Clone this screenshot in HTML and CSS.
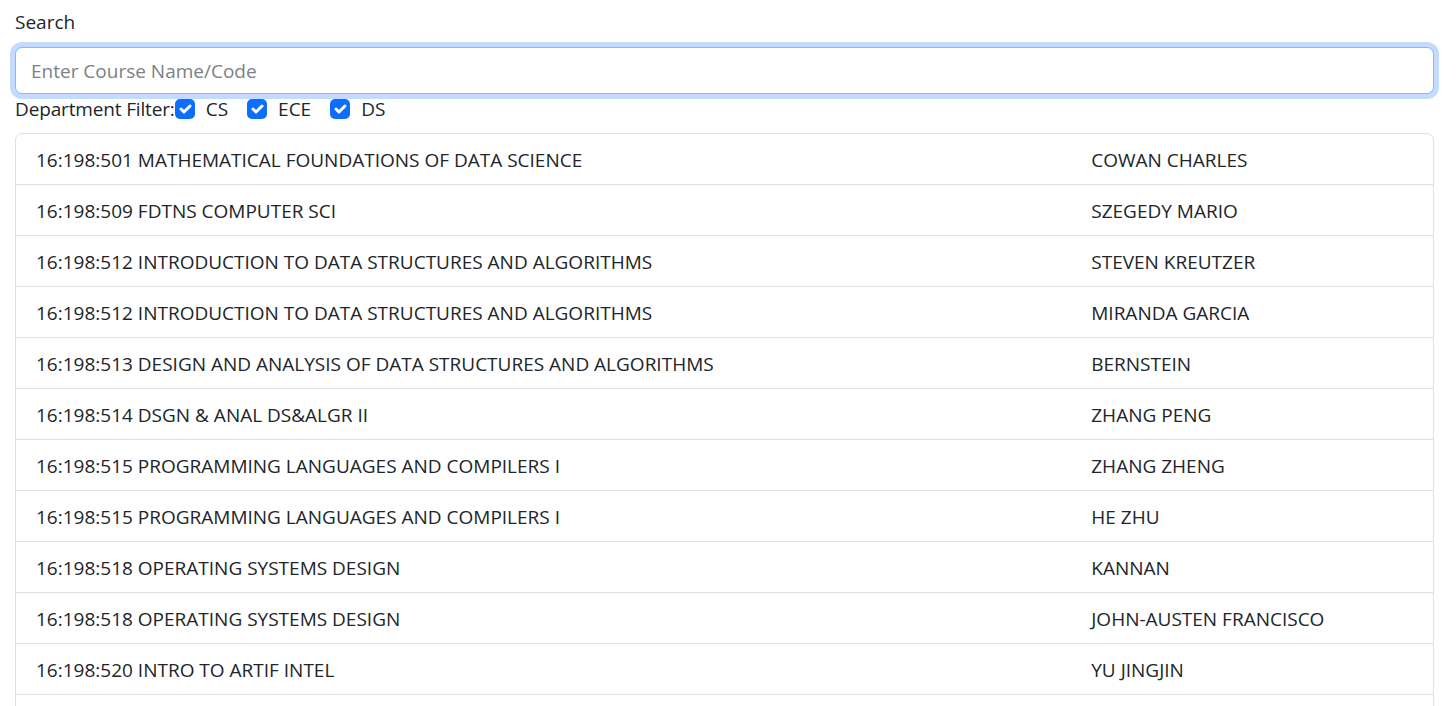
FILE: index.html
```html
<!DOCTYPE html>
<html lang="en">
<head>
<meta charset="utf-8">
<title>Course Search</title>
<link rel="stylesheet" href="styles.css">
</head>
<body>
<div class="page">
  <label class="form-label" for="search">Search</label>
  <input id="search" class="form-control is-focused" type="text" placeholder="Enter Course Name/Code" autofocus>
  <div class="filter">
    <span class="filter-title">Department Filter:</span>
    <label class="check"><span class="box"><svg viewBox="0 0 20 20" width="20" height="20"><path d="m6 10 3 3 6-6" fill="none" stroke="#fff" stroke-width="3" stroke-linecap="round" stroke-linejoin="round"/></svg></span><span class="check-label">CS</span></label>
    <label class="check"><span class="box"><svg viewBox="0 0 20 20" width="20" height="20"><path d="m6 10 3 3 6-6" fill="none" stroke="#fff" stroke-width="3" stroke-linecap="round" stroke-linejoin="round"/></svg></span><span class="check-label">ECE</span></label>
    <label class="check"><span class="box"><svg viewBox="0 0 20 20" width="20" height="20"><path d="m6 10 3 3 6-6" fill="none" stroke="#fff" stroke-width="3" stroke-linecap="round" stroke-linejoin="round"/></svg></span><span class="check-label">DS</span></label>
  </div>
  <ul class="list-group">
    <li class="item"><span class="col-course">16:198:501 MATHEMATICAL FOUNDATIONS OF DATA SCIENCE</span><span class="col-prof">COWAN CHARLES</span></li>
    <li class="item"><span class="col-course">16:198:509 FDTNS COMPUTER SCI</span><span class="col-prof">SZEGEDY MARIO</span></li>
    <li class="item"><span class="col-course">16:198:512 INTRODUCTION TO DATA STRUCTURES AND ALGORITHMS</span><span class="col-prof">STEVEN KREUTZER</span></li>
    <li class="item"><span class="col-course">16:198:512 INTRODUCTION TO DATA STRUCTURES AND ALGORITHMS</span><span class="col-prof">MIRANDA GARCIA</span></li>
    <li class="item"><span class="col-course">16:198:513 DESIGN AND ANALYSIS OF DATA STRUCTURES AND ALGORITHMS</span><span class="col-prof">BERNSTEIN</span></li>
    <li class="item"><span class="col-course">16:198:514 DSGN &amp; ANAL DS&amp;ALGR II</span><span class="col-prof">ZHANG PENG</span></li>
    <li class="item"><span class="col-course">16:198:515 PROGRAMMING LANGUAGES AND COMPILERS I</span><span class="col-prof">ZHANG ZHENG</span></li>
    <li class="item"><span class="col-course">16:198:515 PROGRAMMING LANGUAGES AND COMPILERS I</span><span class="col-prof">HE ZHU</span></li>
    <li class="item"><span class="col-course">16:198:518 OPERATING SYSTEMS DESIGN</span><span class="col-prof">KANNAN</span></li>
    <li class="item"><span class="col-course">16:198:518 OPERATING SYSTEMS DESIGN</span><span class="col-prof">JOHN-AUSTEN FRANCISCO</span></li>
    <li class="item"><span class="col-course">16:198:520 INTRO TO ARTIF INTEL</span><span class="col-prof">YU JINGJIN</span></li>
    <li class="item item-hidden"><span class="col-course">16:198:520 INTRO TO ARTIF INTEL</span><span class="col-prof">BOULARIAS ABDESLAM</span></li>
  </ul>
</div>
</body>
</html>
```
FILE: styles.css
```css
* { box-sizing: border-box; }
html, body { margin: 0; padding: 0; background: #fff; }
body {
  font-family: "Open Sans", "Noto Sans", sans-serif;
  font-size: 19px;
  line-height: 30px;
  color: #212529;
}
.page {
  height: 100vh;
  overflow: hidden;
  padding: 7px 22px 0 15px;
}
.form-label {
  display: block;
  margin-bottom: 10px;
}
.form-control {
  display: block;
  width: 100%;
  height: 47px;
  padding: 7px 15px;
  font: inherit;
  color: #212529;
  border: 1px solid #dee2e6;
  border-radius: 7px;
  background: #fff;
  outline: none;
}
.form-control::placeholder { color: #7b8186; }
.form-control.is-focused, .form-control:focus {
  border-color: #86b7fe;
  box-shadow: 0 0 0 5px rgba(13, 110, 253, 0.25);
}
.filter {
  display: flex;
  align-items: center;
  height: 30px;
}
.filter-title { letter-spacing: -0.15px; }
.check {
  display: flex;
  align-items: center;
  margin-right: 19px;
}
.box {
  width: 20px;
  height: 20px;
  border-radius: 5px;
  background: #0d6efd;
  display: block;
}
.box svg { display: block; }
.check-label { margin-left: 11px; }
.list-group {
  list-style: none;
  margin: 9px 0 0;
  padding: 0;
  border: 1px solid #dee2e6;
  border-radius: 7px;
}
.item {
  display: flex;
  padding: 11px 5px 9px;
  border-top: 1px solid #dee2e6;
  height: 51px;
}
.item:first-child { border-top: none; height: 50px; }
.item-hidden > span { visibility: hidden; }
.col-course { width: 75%; padding: 0 15px; white-space: nowrap; }
.col-prof { width: 25%; padding: 0 15px; white-space: nowrap; }
```
